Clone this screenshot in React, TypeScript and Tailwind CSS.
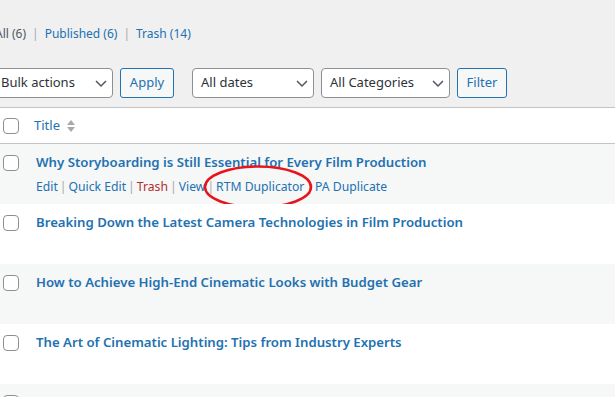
import React from "react";

const posts = [
  "Why Storyboarding is Still Essential for Every Film Production",
  "Breaking Down the Latest Camera Technologies in Film Production",
  "How to Achieve High-End Cinematic Looks with Budget Gear",
  "The Art of Cinematic Lighting: Tips from Industry Experts",
  "Mastering Camera Movements to Elevate Your Filmmaking Techniques",
];

function Checkbox() {
  return <span className="block h-4 w-4 shrink-0 rounded-[4px] border border-[#8c8f94] bg-white" />;
}

function Chevron() {
  return (
    <svg width="16" height="16" viewBox="0 0 16 16" className="shrink-0">
      <path d="M3 6l5 5 5-5" fill="none" stroke="#50575e" strokeWidth="1.5" />
    </svg>
  );
}

function Select({ label, width, className = "" }: { label: string; width: string; className?: string }) {
  return (
    <div
      className={`flex h-[30px] items-center justify-between rounded-[4px] border border-[#8c8f94] bg-white pb-[1px] pl-2 pr-[3px] pt-[1px] text-[13px] text-[#2c3338] ${width} ${className}`}
    >
      <span>{label}</span>
      <Chevron />
    </div>
  );
}

function Btn({ label, width }: { label: string; width: string }) {
  return (
    <div
      className={`flex h-[30px] items-center justify-center rounded-[3px] border border-[#2271b1] bg-[#f6f7f7] text-[13px] text-[#2271b1] ${width}`}
    >
      {label}
    </div>
  );
}

function Sep() {
  return <span className="px-[2px] text-[#a7aaad]">|</span>;
}

export default function App() {
  return (
    <div className="h-[397px] w-[615px] overflow-hidden bg-[#f0f0f1] font-['Noto_Sans',sans-serif] text-[#3c434a]">
      <div className="ml-[-5px] mt-[23px] flex h-[22px] items-center text-[12px]">
        <span className="text-[#50575e]">All (6)</span>
        <span className="px-[6px] text-[#a7aaad]">|</span>
        <span className="text-[#2271b1]">Published (6)</span>
        <span className="px-[6px] text-[#a7aaad]">|</span>
        <span className="text-[#2271b1]">Trash (14)</span>
      </div>

      <div className="mt-[23px] flex h-[30px] items-center">
        <Select label="Bulk actions" width="w-[121px]" className="ml-[-8px]" />
        <div className="ml-[7px]">
          <Btn label="Apply" width="w-[54px]" />
        </div>
        <Select label="All dates" width="w-[122px]" className="ml-[18px]" />
        <Select label="All Categories" width="w-[129px]" className="ml-[7px]" />
        <div className="ml-[7px]">
          <Btn label="Filter" width="w-[50px]" />
        </div>
      </div>

      <div className="mt-[9px] border-t border-[#c3c4c7] bg-white">
        <div className="flex h-[36px] items-center border-b border-[#c3c4c7] pl-[3px]">
          <Checkbox />
          <span className="ml-[15px] text-[13px] text-[#2271b1]">Title</span>
          <svg width="10" height="14" viewBox="0 0 10 14" className="ml-[6px]">
            <path d="M5 1L9 6H1z" fill="#a7aaad" />
            <path d="M5 13L9 8H1z" fill="#a7aaad" />
          </svg>
        </div>

        {posts.map((t, i) => (
          <div
            key={t}
            className={`relative flex h-[60px] items-start pl-[3px] pt-[9px] ${i % 2 === 0 ? "bg-[#f6f7f7]" : "bg-white"}`}
          >
            <div className="pt-[2px]">
              <Checkbox />
            </div>
            <div className="ml-[17px]">
              <div className="text-[13.2px] font-semibold leading-[18px] text-[#2271b1]">{t}</div>
              {i === 0 && (
                <div className="mt-[7px] flex text-[12.2px] leading-[18px] text-[#2271b1]">
                  <span>Edit</span>
                  <Sep />
                  <span>Quick Edit</span>
                  <Sep />
                  <span className="text-[#b32d2e]">Trash</span>
                  <Sep />
                  <span>View</span>
                  <Sep />
                  <span>RTM Duplicator</span>
                  <Sep />
                  <span>PA Duplicate</span>
                </div>
              )}
            </div>
            {i === 0 && (
              <svg
                width="112"
                height="46"
                viewBox="0 0 112 46"
                className="pointer-events-none absolute left-[202px] top-[20px]"
              >
                <ellipse cx="56" cy="23" rx="53" ry="20.5" fill="none" stroke="#e8141c" strokeWidth="2.5" />
              </svg>
            )}
          </div>
        ))}
      </div>
    </div>
  );
}
